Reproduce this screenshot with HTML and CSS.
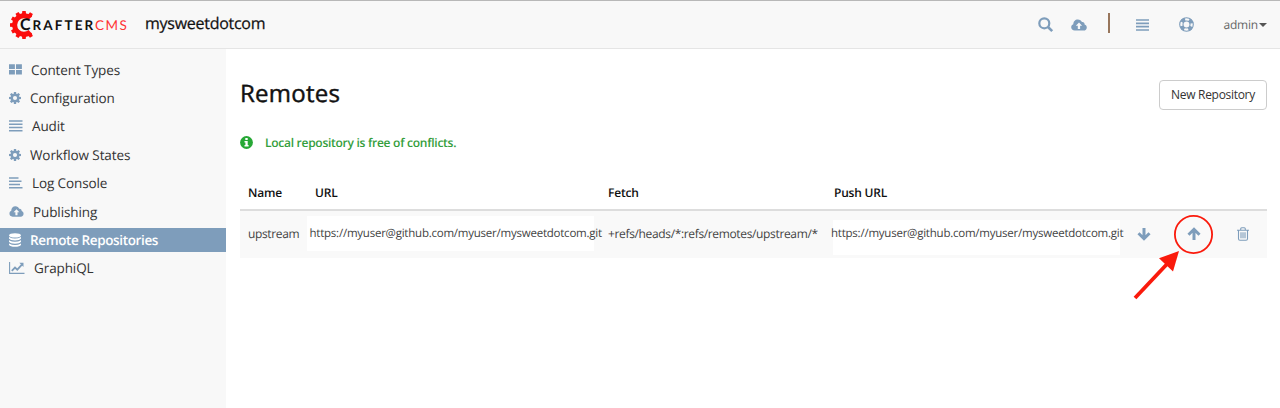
FILE: index.html
```
<!DOCTYPE html>
<html lang="en">
<head>
<meta charset="utf-8">
<title>Crafter CMS</title>
<link rel="stylesheet" href="styles.css">
</head>
<body>
<svg width="0" height="0" class="defs">
  <symbol id="cloud" viewBox="0 0 16 12"><path fill="currentColor" fill-rule="evenodd" d="M3.8 11.6C1.6 11.6.2 10.2.2 8.3c0-1.6.9-2.6 2.1-3C2.2 2.5 4.2.4 6.8.4c2 0 3.500 1.100 4.100 2.700 1.500-.4 2.900.7 2.700 2.400 1.300.4 2.200 1.500 2.200 2.900 0 1.800-1.400 3.200-3.200 3.200zM6.800 10h2.300V6.800h2L8 3.500 4.800 6.800h2z"/></symbol>
  <symbol id="gear" viewBox="0 0 12 12"><g fill="currentColor"><path id="t" d="M4.900 0h2.200l.4 3h-3zM4.900 12h2.200l.4-3h-3z"/><use href="#t" transform="rotate(45 6 6)"/><use href="#t" transform="rotate(90 6 6)"/><use href="#t" transform="rotate(135 6 6)"/></g><circle cx="6" cy="6" r="3.200" fill="none" stroke="currentColor" stroke-width="2.300"/></symbol>
  <symbol id="arrow" viewBox="0 0 14 14"><path d="M7 13V2.500M1.500 7.800 7 2.300l5.500 5.500" fill="none" stroke="currentColor" stroke-width="3"/></symbol>
</svg>
<header class="topbar">
  <div class="logo">
    <svg class="logo-gear" width="26" height="30" viewBox="0 0 26 30">
      <path d="M21.300 8.200A9.300 9.300 0 1 0 21.300 21.800" fill="none" stroke="#fb0d0d" stroke-width="5"/>
      <g fill="#fb0d0d"><path id="tooth" d="M12.900 4.500 13.300 1h3.400l.4 3.500z"/><use href="#tooth" transform="rotate(32 15 15)"/><use href="#tooth" transform="rotate(-30 15 15)"/><use href="#tooth" transform="rotate(-60 15 15)"/><use href="#tooth" transform="rotate(-90 15 15)"/><use href="#tooth" transform="rotate(-120 15 15)"/><use href="#tooth" transform="rotate(-150 15 15)"/><use href="#tooth" transform="rotate(180 15 15)"/><use href="#tooth" transform="rotate(148 15 15)"/></g>
    </svg>
    <span class="logo-c">C</span><span class="logo-name">RAFTER</span><span class="logo-cms">CMS</span>
  </div>
  <div class="site">mysweetdotcom</div>
  <nav class="tools">
    <svg class="i-search" width="15" height="15" viewBox="0 0 15 15" fill="none" stroke="currentColor" stroke-width="2.200"><circle cx="6.300" cy="6.300" r="5"/><path d="m10 10 4.200 4.200" stroke-width="2.600"/></svg>
    <svg class="i-cloud" width="16" height="12"><use href="#cloud"/></svg>
    <span class="sep"></span>
    <svg class="i-bars" width="13" height="12" viewBox="0 0 13 12"><path d="M0 1h13M0 4.300h13M0 7.700h13M0 11h13" stroke="currentColor" stroke-width="1.700"/></svg>
    <svg class="i-help" width="15" height="15" viewBox="0 0 15 15" fill="none" stroke="currentColor"><circle cx="7.500" cy="7.500" r="6.800" stroke-width="1.100"/><circle cx="7.500" cy="7.500" r="3.500" stroke-width="1.100"/><circle cx="7.500" cy="7.500" r="5.200" stroke-width="3.600" stroke-dasharray="4.080 4.088" stroke-dashoffset="-2.040"/></svg>
    <span class="user">admin</span><span class="caret"></span>
  </nav>
</header>
<div class="layout">
  <aside class="sidebar">
    <a class="item"><svg width="13" height="11" viewBox="0 0 13 11"><path fill="currentColor" d="M0 .3h5.900v4.600H0zM7 .3h5.900v4.600H7zM0 6h5.900v4.600H0zM7 6h5.900v4.600H7z"/></svg><span>Content Types</span></a>
    <a class="item"><svg width="12" height="12"><use href="#gear"/></svg><span>Configuration</span></a>
    <a class="item"><svg width="14" height="12" viewBox="0 0 14 12"><path d="M0 1h13.500M0 4.300h13.500M0 7.500h13.500M0 10.700h13.500" stroke="currentColor" stroke-width="1.600"/></svg><span>Audit</span></a>
    <a class="item"><svg width="12" height="12"><use href="#gear"/></svg><span>Workflow States</span></a>
    <a class="item"><svg width="14" height="12" viewBox="0 0 14 12"><path d="M0 1h9.500M0 4.300h12.500M0 7.500h11M0 10.700h13.500" stroke="currentColor" stroke-width="1.600"/></svg><span>Log Console</span></a>
    <a class="item"><svg width="15" height="11" viewBox="0 0 16 12"><use href="#cloud"/></svg><span>Publishing</span></a>
    <a class="item active"><svg width="12" height="14" viewBox="0 0 12 14" fill="currentColor"><ellipse cx="6" cy="2.400" rx="6" ry="2.200"/><path d="M0 3.900q6 3 12 0v1.600q-1.200 1.900-6 1.900T0 5.500zM0 7.200q6 3 12 0v1.600q-1.200 1.900-6 1.900T0 8.800zM0 10.500q6 3 12 0v1.300q-1.200 2-6 2t-6-2z"/></svg><span>Remote Repositories</span></a>
    <a class="item"><svg width="16" height="12" viewBox="0 0 16 12" fill="none" stroke="currentColor"><path d="M.6 0v11.400H15.500" stroke-width="1.100"/><path d="M2.800 8.800 6 5.500l2.300 2.200 4.600-5" stroke-width="1.800"/><path d="M10.300.8H14.500V5z" fill="currentColor" stroke="none"/></svg><span>GraphiQL</span></a>
  </aside>
  <main class="main">
    <div class="head"><h1>Remotes</h1><button class="new">New Repository</button></div>
    <div class="status"><svg width="13" height="13" viewBox="0 0 13 13"><circle cx="6.500" cy="6.500" r="6.400" fill="#27a836"/><path fill="#fff" d="M5.300 2h2.400v1.900H5.300zM4.500 5h3.200v4h.9v1.500H4.500V9h.9V6.400h-.9z"/></svg><span>Local repository is free of conflicts.</span></div>
    <div class="table">
      <div class="row thead"><span>Name</span><span>URL</span><span>Fetch</span><span>Push URL</span></div>
      <div class="row tbody">
        <span class="name">upstream</span>
        <span class="url">https://myuser@github.com/myuser/mysweetdotcom.git</span>
        <span class="fetch">+refs/heads/*:refs/remotes/upstream/*</span>
        <span class="url push">https://myuser@github.com/myuser/mysweetdotcom.git</span>
        <div class="actions">
          <svg class="down" width="14" height="14"><use href="#arrow"/></svg>
          <svg class="up" width="14" height="14"><use href="#arrow"/></svg>
          <svg width="12" height="14" viewBox="0 0 12 14" fill="none" stroke="currentColor" stroke-width="1.100"><path d="M0 3.200h12M3.700 3V1.700q0-1 1-1h2.600q1 0 1 1V3M1.500 3.200v8.600q0 1.500 1.400 1.500h6.200q1.400 0 1.400-1.500V3.200M4 5.300v5.900M6 5.300v5.900M8 5.300v5.900"/></svg>
        </div>
      </div>
    </div>
  </main>
</div>
<svg class="callout" width="90" height="90" viewBox="0 0 90 90"><circle cx="63.500" cy="24.500" r="18.600" fill="none" stroke="#fa1a0c" stroke-width="1.800"/><path d="M5 88 38 53" stroke="#fa1a0c" stroke-width="3.800"/><path d="M49 41 29 48.300 43 61.500z" fill="#fa1a0c"/></svg>
</body>
</html>
```
FILE: styles.css
```
* { box-sizing: border-box; }
body { margin: 0; height: 408px; overflow: hidden; background: #fff; color: #333; font-family: "Open Sans", "Noto Sans", sans-serif; position: relative; text-rendering: geometricPrecision; }
svg { display: block; flex: none; overflow: visible; }
.defs { position: absolute; }
.topbar { height: 49px; display: flex; align-items: center; background: #f8f8f8; border-top: 1px solid #b8b8b8; border-bottom: 1px solid #e5e5e5; }
.logo { display: flex; align-items: center; width: 145px; padding-left: 9px; font: 700 13.500px/20px Lato, sans-serif; color: #111; }
.logo-gear { width: 26px; margin-right: -15px; }
.logo-c { width: 12.500px; font-size: 16px; }
.logo-name { width: 62.500px; letter-spacing: 2.100px; }
.logo-cms { color: #f33; font-weight: 400; letter-spacing: 1.500px; }
.site { font-size: 16px; line-height: 22px; letter-spacing: -.27px; -webkit-text-stroke: .25px #111; color: #111; padding-bottom: 3px; }
.tools { display: flex; align-items: center; margin-left: auto; padding-right: 13px; color: #7e9dbb; }
.i-search { margin: 0 18px 1px 0; }
.i-cloud { margin-right: 21px; }
.sep { width: 2px; height: 20px; background: #98765c; margin: 0 26px 3px 0; }
.i-bars { margin-right: 30px; }
.i-help { margin-right: 29px; }
.user { font-size: 12px; line-height: 18px; letter-spacing: -.2px; color: #666; }
.caret { border: 4px solid transparent; border-top-color: #555; border-bottom: 0; margin-left: 1px; }
.layout { display: flex; height: 359px; }
.sidebar { width: 226px; background: #f8f8f8; padding-top: 9px; }
.item { display: flex; align-items: center; gap: 9px; height: 23.400px; margin-bottom: 5px; padding-left: 9px; font-size: 13.500px; letter-spacing: -.1px; color: #333; white-space: nowrap; }
.item svg { color: #7e9dbb; }
.item.active { background: #7e9dbb; color: #fff; font-weight: 600; letter-spacing: -.37px; }
.item.active svg { color: #fff; }
.main { flex: 1; padding: 27px 13px 0 14px; }
.head { display: flex; justify-content: space-between; align-items: flex-start; height: 60px; }
h1 { margin: 1px 0 0; font-size: 24px; line-height: 34px; font-weight: 400; letter-spacing: .25px; -webkit-text-stroke: .45px #111; color: #111; }
.new { width: 108px; height: 30px; margin-top: 4px; padding: 0 0 2px; border: 1px solid #ccc; border-radius: 4px; background: #fff; color: #333; font: 12px "Open Sans", sans-serif; letter-spacing: -.3px; white-space: nowrap; }
.status { display: flex; align-items: center; gap: 12px; height: 14px; margin-top: -1px; font-size: 12px; font-weight: 600; letter-spacing: -.27px; color: #349e3c; }
.table { margin-top: 28px; font-size: 12px; color: #444; white-space: nowrap; }
.row { display: grid; grid-template-columns: 67px 293px 226px 286px 155px; align-items: center; }
.thead { height: 34px; padding-bottom: 1px; border-bottom: 2px solid #ddd; color: #111; font-weight: 600; letter-spacing: -.2px; }
.thead span, .name, .fetch { padding-left: 8px; }
.tbody { height: 47px; background: #f9f9f9; }
.name, .fetch { letter-spacing: -.35px; padding-bottom: 2px; }
.url { width: 287px; height: 35px; line-height: 35px; padding-left: 2.500px; background: #fff; font-size: 11.500px; letter-spacing: -.23px; margin-bottom: 3px; }
.push { margin: 5px 0 0 7px; padding: 0; line-height: 28px; text-indent: -2px; }
.actions { display: flex; align-items: center; padding: 0 0 2px 25px; gap: 36px; color: #7e9dbb; }
.down { transform: rotate(180deg); }
.callout { position: absolute; left: 1130px; top: 210px; }
```
